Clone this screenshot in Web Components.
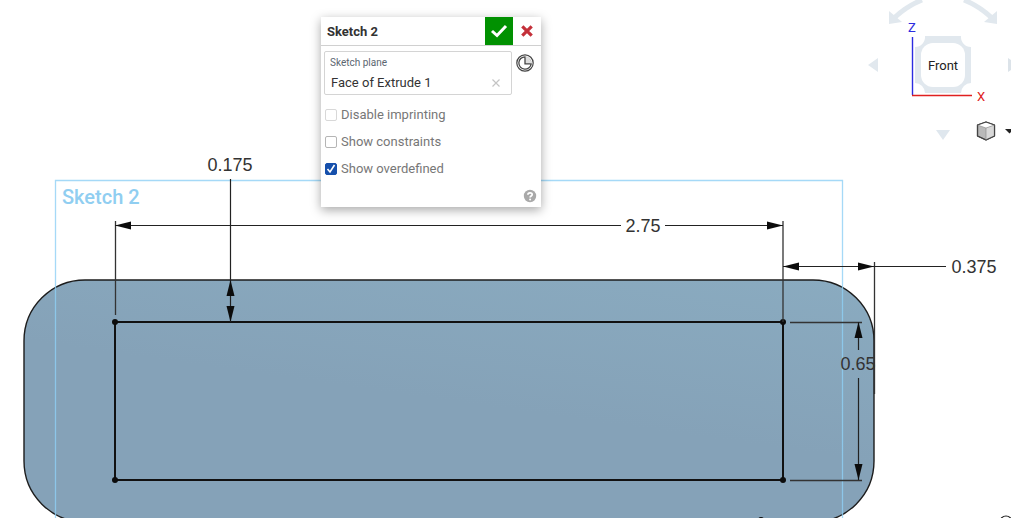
<!DOCTYPE html>
<html lang="en">
<head>
<meta charset="utf-8">
<title>Sketch 2</title>
<style>
  body {
    margin: 0;
    overflow: hidden;
    background: #fff;
    color: #333;
    font-family: Roboto, "Liberation Sans", sans-serif;
  }
</style>
</head>
<body>

<cad-viewport>
  <sketch-canvas></sketch-canvas>
  <sketch-dialog slot="dialog" heading="Sketch 2">
    <plane-field label="Sketch plane">Face of Extrude 1</plane-field>
    <option-check disabled>Disable imprinting</option-check>
    <option-check>Show constraints</option-check>
    <option-check checked>Show overdefined</option-check>
  </sketch-dialog>
  <view-cube slot="view" face="Front"></view-cube>
  <shading-menu slot="shading"></shading-menu>
</cad-viewport>

<script>
// ─── Viewport ─────────────────────────────────────────────────────────────────
class CadViewport extends HTMLElement {
  constructor() {
    super();
    this.attachShadow({ mode: "open" });
  }

  connectedCallback() {
    this.shadowRoot.innerHTML = `
      <style>
        :host {
          display: block;
          position: relative;
          height: 100vh;
          overflow: hidden;
        }
        slot[name]::slotted(*) { position: absolute; }
        slot[name="dialog"]::slotted(*) { left: 321px; top: 17px; }
        slot[name="view"]::slotted(*) { right: -10px; top: 0; }
        slot[name="shading"]::slotted(*) { right: -3px; top: 121px; }
      </style>
      <slot></slot>
      <slot name="dialog"></slot>
      <slot name="view"></slot>
      <slot name="shading"></slot>
    `;
  }
}

// ─── Sketch canvas ────────────────────────────────────────────────────────────
class SketchCanvas extends HTMLElement {
  constructor() {
    super();
    this.attachShadow({ mode: "open" });
  }

  // arrow head with its tip at x,y
  arrow(x, y, deg) {
    return `<path class="head" d="M0 0L-16 -4V4Z" transform="translate(${x} ${y}) rotate(${deg})"/>`;
  }

  connectedCallback() {
    this.shadowRoot.innerHTML = `
      <style>
        :host { display: block; height: 100%; }
        svg { display: block; width: 100%; height: 100%; }
        .body { fill: url(#shade); stroke: #1c1c1c; stroke-width: 1.4; }
        .plane { fill: none; stroke: #8fd0f5; stroke-opacity: .8; stroke-width: 1.3; }
        .rect { fill: none; stroke: #111; stroke-width: 2; }
        .dot, .head { fill: #0c0c0c; }
        .dim { fill: none; stroke: #222; stroke-width: 1.2; }
        .ext { fill: none; stroke: #333; stroke-width: 1.3; }
        text { font-size: 18px; fill: #333; text-anchor: middle; }
        .value { font-family: "Liberation Sans", sans-serif; }
        .name { font-size: 20px; font-weight: 500; fill: #90cef1; text-anchor: start; }
      </style>
      <svg role="img" aria-label="Sketch">
        <defs>
          <linearGradient id="shade" x1="1" y1="0" x2=".7" y2=".6">
            <stop offset="0" stop-color="#8aabc0"/>
            <stop offset="1" stop-color="#85a2b8"/>
          </linearGradient>
        </defs>
        <rect class="body" x="24" y="280" width="850" height="242" rx="61"/>
        <path class="plane" d="M55.500 700V180.500H842.500V700"/>
        <text class="name" x="62" y="204">Sketch 2</text>

        <rect class="rect" x="115" y="322" width="668" height="158"/>
        <circle class="dot" cx="115" cy="322" r="3"/>
        <circle class="dot" cx="783" cy="322" r="3"/>
        <circle class="dot" cx="115" cy="480" r="3"/>
        <circle class="dot" cx="783" cy="480" r="3"/>

        <path class="ext" d="M115.500 221V315M783 221V322M874.500 262V394M790 322.500H862M790 480.500H862"/>
        <path class="dim" d="M115 225.500H621M665 225.500H783M783 266.500H946M230.500 179V322M858.500 322V350M858.500 378V480"/>
        ${this.arrow(115, 225.5, 180)}
        ${this.arrow(783, 225.5, 0)}
        ${this.arrow(783, 266.5, 180)}
        ${this.arrow(874, 266.5, 0)}
        ${this.arrow(230.5, 280, -90)}
        ${this.arrow(230.5, 322, 90)}
        ${this.arrow(858.5, 322, -90)}
        ${this.arrow(858.5, 480, 90)}

        <text class="value" x="230" y="171">0.175</text>
        <text class="value" x="643" y="232">2.75</text>
        <text class="value" x="974" y="273">0.375</text>
        <text class="value" x="858" y="370">0.65</text>

        <circle class="dot" cx="761" cy="520" r="3"/>
        <circle class="dim" cx="1006" cy="522" r="6"/>
      </svg>
    `;
  }
}

// ─── Dialog ───────────────────────────────────────────────────────────────────
class SketchDialog extends HTMLElement {
  constructor() {
    super();
    this.attachShadow({ mode: "open" });
  }

  connectedCallback() {
    this.shadowRoot.innerHTML = `
      <style>
        :host {
          display: flex;
          flex-direction: column;
          width: 220px;
          background: #fff;
          box-shadow: 0 3px 10px rgba(0,0,0,.35);
        }
        header {
          display: flex;
          align-items: center;
          height: 28px;
          border-bottom: 1px solid #d0d0d0;
        }
        h2 { flex: 1; margin: 0; padding-left: 6px; font-size: 13px; font-weight: 700; }
        button {
          display: grid;
          place-items: center;
          width: 28px;
          height: 28px;
          padding: 0;
          border: 0;
          background: none;
        }
        .ok { background: #019101; }
        .rows {
          display: flex;
          flex-direction: column;
          padding: 5px 6px 0 3px;
        }
        footer { display: flex; justify-content: flex-end; padding: 7px 4px 4px; }
        footer button { width: 14px; height: 14px; }
      </style>
      <header>
        <h2></h2>
        <button class="ok" aria-label="Accept">
          <svg width="18" height="14" viewBox="0 0 18 14"><path d="M2 7L7 11.500L16 2" fill="none" stroke="#fff" stroke-width="3"/></svg>
        </button>
        <button aria-label="Cancel">
          <svg width="12" height="12" viewBox="0 0 12 12"><path d="M1.300 1.300L10.700 10.700M10.700 1.300L1.300 10.700" stroke="#c4303a" stroke-width="3.200"/></svg>
        </button>
      </header>
      <div class="rows"><slot></slot></div>
      <footer>
        <button aria-label="Help">
          <svg width="14" height="14" viewBox="0 0 14 14">
            <circle cx="7" cy="7" r="6.200" fill="#a9a9a9"/>
            <path d="M4.900 5.700C4.900 3.200 9.200 3.200 9.200 5.500C9.200 7 7.100 6.900 7.100 8.500" fill="none" stroke="#fff" stroke-width="1.700"/>
            <circle cx="7.100" cy="10.400" r="1" fill="#fff"/>
          </svg>
        </button>
      </footer>
    `;
    this.shadowRoot.querySelector("h2").textContent = this.getAttribute("heading");
  }
}

class PlaneField extends HTMLElement {
  constructor() {
    super();
    this.attachShadow({ mode: "open" });
  }

  connectedCallback() {
    this.shadowRoot.innerHTML = `
      <style>
        :host { display: flex; gap: 3px; margin-bottom: 6px; }
        .box {
          flex: 1;
          display: flex;
          flex-direction: column;
          box-sizing: border-box;
          height: 44px;
          padding: 4px 6px 0 5px;
          border: 1px solid #d4d4d4;
          border-radius: 2px;
        }
        .label { font-size: 10px; line-height: 14px; color: #5b6670; }
        .item {
          display: flex;
          align-items: center;
          justify-content: space-between;
          padding-left: 1px;
          font-size: 13px;
          line-height: 26px;
        }
        button { display: grid; place-items: center; padding: 0; border: 0; background: none; }
        .remove { width: 18px; height: 18px; }
        .final { width: 20px; height: 24px; }
      </style>
      <div class="box" role="group" aria-labelledby="label">
        <span class="label" id="label"></span>
        <div class="item">
          <span><slot></slot></span>
          <button class="remove" aria-label="Remove">
            <svg width="8" height="8" viewBox="0 0 8 8"><path d="M.5 .5L7.500 7.500M7.500 .5L.5 7.500" stroke="#c4c4c4" stroke-width="1.200"/></svg>
          </button>
        </div>
      </div>
      <button class="final" aria-label="Final">
        <svg width="18" height="18" viewBox="0 0 18 18" fill="none" stroke="#444">
          <circle cx="9" cy="9" r="8.200" stroke-width="1.200"/>
          <path d="M9 3.500A5.500 5.500 0 0 1 14.500 9.500H9Z" fill="#ddd" stroke="none"/>
          <path d="M9 2.800A6.200 6.200 0 1 0 15.200 9.800H9Z" stroke-width="1.300"/>
          <path d="M9 2.800A6.200 6.200 0 0 1 15.200 9.800" stroke="#aaa" stroke-width=".7"/>
        </svg>
      </button>
    `;
    this.shadowRoot.getElementById("label").textContent = this.getAttribute("label");
  }
}

class OptionCheck extends HTMLElement {
  constructor() {
    super();
    this.attachShadow({ mode: "open" });
  }

  connectedCallback() {
    this.shadowRoot.innerHTML = `
      <style>
        :host { display: block; }
        label {
          display: flex;
          align-items: center;
          gap: 4px;
          height: 27px;
          padding-left: 1px;
          font-size: 13px;
          color: #777;
        }
        .tick { display: grid; }
        .tick > * { grid-area: 1 / 1; }
        input {
          appearance: none;
          box-sizing: border-box;
          width: 12px;
          height: 12px;
          margin: 0;
          border: 1px solid #b5b5b5;
          border-radius: 2px;
          background: #fff;
        }
        input:disabled { border-color: #d8d8d8; }
        input:checked { border-color: #1650ac; background: #1650ac; }
        svg { visibility: hidden; pointer-events: none; }
        input:checked + svg { visibility: visible; }
      </style>
      <label>
        <span class="tick">
          <input type="checkbox">
          <svg width="12" height="12" viewBox="0 0 12 12"><path d="M2.500 6L5 9L9.500 2" fill="none" stroke="#fff" stroke-width="1.600"/></svg>
        </span>
        <span><slot></slot></span>
      </label>
    `;
    const input = this.shadowRoot.querySelector("input");
    input.checked = this.hasAttribute("checked");
    input.disabled = this.hasAttribute("disabled");
  }
}

// ─── View cube ────────────────────────────────────────────────────────────────
class ViewCube extends HTMLElement {
  constructor() {
    super();
    this.attachShadow({ mode: "open" });
  }

  connectedCallback() {
    this.shadowRoot.innerHTML = `
      <style>
        :host {
          display: grid;
          grid-template-columns: 16px 124px 16px;
          grid-template-rows: 130px 10px;
          place-items: center;
        }
        .art { position: absolute; left: 0; top: 0; }
        .art text { font-size: 13px; }
        button {
          position: relative;
          display: grid;
          place-items: center;
          padding: 0;
          border: 0;
          background: none;
          font: inherit;
          color: #222;
        }
        .face {
          width: 44px;
          height: 44px;
          border-radius: 12px;
          background: #fff;
          font-size: 13px;
        }
        .down { grid-column: 2; }
      </style>
      <svg class="art" width="156" height="140" viewBox="0 0 156 140" aria-hidden="true">
        <g fill="#e1e8ee">
          <path d="M60 36H96A10 10 0 0 0 106 47V83A10 10 0 0 0 96 93H60A10 10 0 0 0 50 83V47A10 10 0 0 0 60 36Z"/>
          <path d="M24 11L24 24L37 22Z"/>
          <path d="M132 11L132 24L119 22Z"/>
        </g>
        <path d="M57 0Q42 6 29 18M99 0Q114 6 127 18" fill="none" stroke="#e1e8ee" stroke-width="5"/>
        <path d="M47.500 37V95" stroke="#2c2ce0" stroke-width="1.400"/>
        <path d="M47 95.500H107" stroke="#e02020" stroke-width="1.400"/>
        <text x="43" y="32" fill="#2c2ce0">Z</text>
        <text x="112" y="101" fill="#e02020">X</text>
      </svg>
      <button aria-label="Rotate left"><svg width="10" height="14"><path d="M0 7L10 0V14Z" fill="#e1e8ee"/></svg></button>
      <button class="face"></button>
      <button aria-label="Rotate right"><svg width="10" height="14"><path d="M10 7L0 0V14Z" fill="#dce3e9"/></svg></button>
      <button class="down" aria-label="Rotate down"><svg width="14" height="10"><path d="M0 0H14L7 10Z" fill="#dfe7ee"/></svg></button>
    `;
    this.shadowRoot.querySelector(".face").textContent = this.getAttribute("face");
  }
}

class ShadingMenu extends HTMLElement {
  constructor() {
    super();
    this.attachShadow({ mode: "open" });
  }

  connectedCallback() {
    this.shadowRoot.innerHTML = `
      <style>
        :host { display: block; }
        button {
          display: flex;
          align-items: center;
          gap: 9px;
          padding: 0;
          border: 0;
          background: none;
        }
      </style>
      <button aria-label="Shading" aria-haspopup="menu">
        <svg width="20" height="20" viewBox="0 0 20 20" stroke="#444" stroke-width="1.200" stroke-linejoin="round">
          <path d="M1.500 4L10 1L18.500 4V15L10 19L1.500 15Z" fill="#b9b9b9"/>
          <path d="M1.500 4L10 1L18.500 4L10 7Z" fill="#fff" stroke="none"/>
          <path d="M10 7L18.500 4V15L10 19Z" fill="#d8d8d8" stroke="none"/>
          <path d="M1.500 4L10 1L18.500 4V15L10 19L1.500 15Z" fill="none"/>
          <path d="M1.500 4L10 7L18.500 4M10 7V19" fill="none" stroke="#888" stroke-width=".6"/>
        </svg>
        <svg width="9" height="5"><path d="M0 0H9L4.500 4.500Z" fill="#222"/></svg>
      </button>
    `;
  }
}

customElements.define("cad-viewport", CadViewport);
customElements.define("sketch-canvas", SketchCanvas);
customElements.define("sketch-dialog", SketchDialog);
customElements.define("plane-field", PlaneField);
customElements.define("option-check", OptionCheck);
customElements.define("view-cube", ViewCube);
customElements.define("shading-menu", ShadingMenu);
</script>
</body>
</html>
